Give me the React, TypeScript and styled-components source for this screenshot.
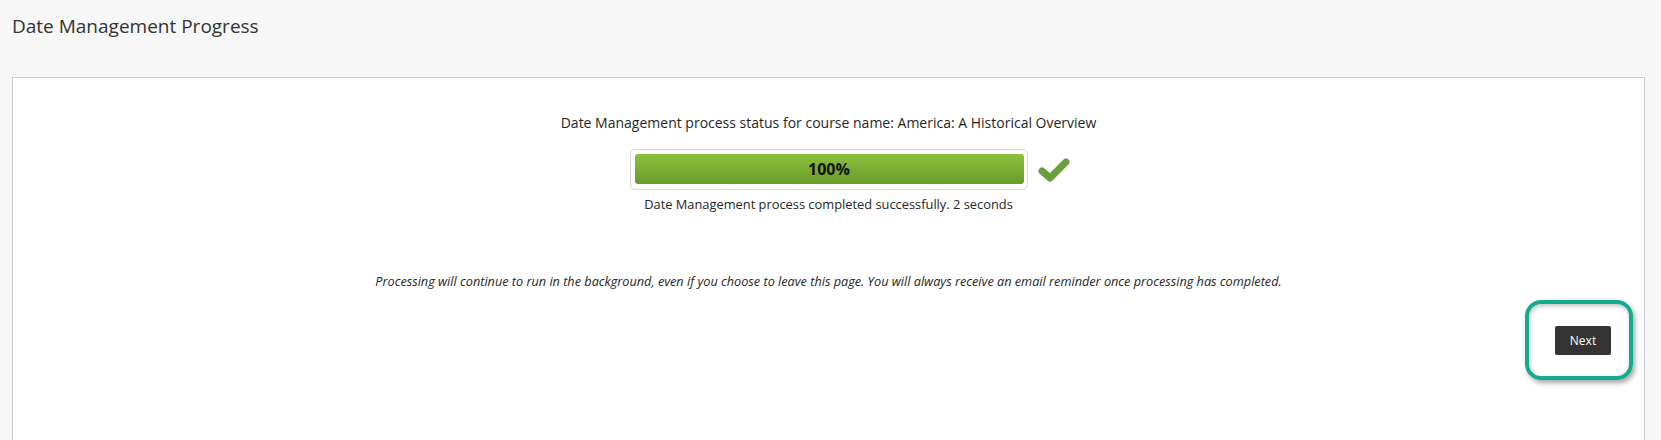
import React from "react";
import styled, { createGlobalStyle } from "styled-components";

const Global = createGlobalStyle`
  html, body { margin: 0; padding: 0; background: #f7f7f7; }
  body { font-family: "Open Sans", "Liberation Sans", sans-serif; color: #262626; }
`;

const Page = styled.div`
  min-height: 440px;
  padding: 12px 16px 0 12px;
  box-sizing: border-box;
`;

const Title = styled.h1`
  margin: 0;
  font-size: 19px;
  line-height: 28px;
  font-weight: 400;
  color: #333;
`;

const Panel = styled.section`
  position: relative;
  margin-top: 37px;
  background: #fff;
  border: 1px solid #cdcdcd;
  border-bottom: none;
  min-height: 370px;
  padding: 35px 33px 40px;
  box-sizing: border-box;
  display: flex;
  flex-direction: column;
  align-items: center;
`;

const Status = styled.p`
  margin: 0;
  font-size: 14px;
  line-height: 20px;
`;

const BarRow = styled.div`
  margin-top: 16px;
  width: 100%;
  display: grid;
  grid-template-columns: 1fr auto 1fr;
  align-items: center;
`;

const BarOuter = styled.div`
  grid-column: 2;
  width: 398px;
  height: 41px;
  box-sizing: border-box;
  border: 1px solid #d9d9d9;
  border-radius: 5px;
  padding: 4px 3px 5px 4px;
  box-shadow: inset 0 0 2px rgba(0, 0, 0, 0.06);
`;

const BarFill = styled.div`
  height: 100%;
  border-radius: 3px;
  background: linear-gradient(#8cbf3b, #6b9b2b);
  display: flex;
  align-items: center;
  justify-content: center;
  font-size: 16px;
  font-weight: 700;
  color: #111;
`;

const Check = styled.svg`
  grid-column: 3;
  margin-left: 9px;
  width: 34px;
  height: 26px;
`;

const Done = styled.p`
  margin: 5px 0 0;
  font-size: 12.85px;
  line-height: 18px;
`;

const Note = styled.p`
  margin: 59px 0 0;
  font-size: 12.7px;
  line-height: 18px;
  font-style: italic;
`;

const Actions = styled.div`
  align-self: stretch;
  display: flex;
  justify-content: flex-end;
  margin-top: 36px;
`;

const Highlight = styled.div`
  position: relative;
`;

const Ring = styled.div`
  position: absolute;
  left: -30px;
  top: -26px;
  width: 108px;
  height: 80px;
  box-sizing: border-box;
  border: 4px solid #12ab8c;
  border-radius: 16px;
  box-shadow: 2px 3px 5px rgba(0, 0, 0, 0.35), inset 1px 2px 4px rgba(0, 0, 0, 0.25);
  pointer-events: none;
`;

const Button = styled.button`
  width: 56px;
  height: 29px;
  border: none;
  border-radius: 2px;
  background: #333;
  color: #fff;
  font-family: "Open Sans", "Liberation Sans", sans-serif;
  font-size: 12px;
  padding: 0;
  cursor: pointer;
`;

export default function App() {
  return (
    <>
      <Global />
      <Page>
        <Title>Date Management Progress</Title>
        <Panel>
          <Status>Date Management process status for course name: America: A Historical Overview</Status>
          <BarRow>
            <BarOuter>
              <BarFill>100%</BarFill>
            </BarOuter>
            <Check viewBox="0 0 34 26">
              <polyline
                points="5,14 13,21 29,5"
                fill="none"
                stroke="#6a9f3c"
                strokeWidth="7"
                strokeLinecap="round"
                strokeLinejoin="round"
              />
            </Check>
          </BarRow>
          <Done>Date Management process completed successfully. 2 seconds</Done>
          <Note>
            Processing will continue to run in the background, even if you choose to leave this page. You will always
            receive an email reminder once processing has completed.
          </Note>
          <Actions>
            <Highlight>
              <Ring />
              <Button>Next</Button>
            </Highlight>
          </Actions>
        </Panel>
      </Page>
    </>
  );
}
